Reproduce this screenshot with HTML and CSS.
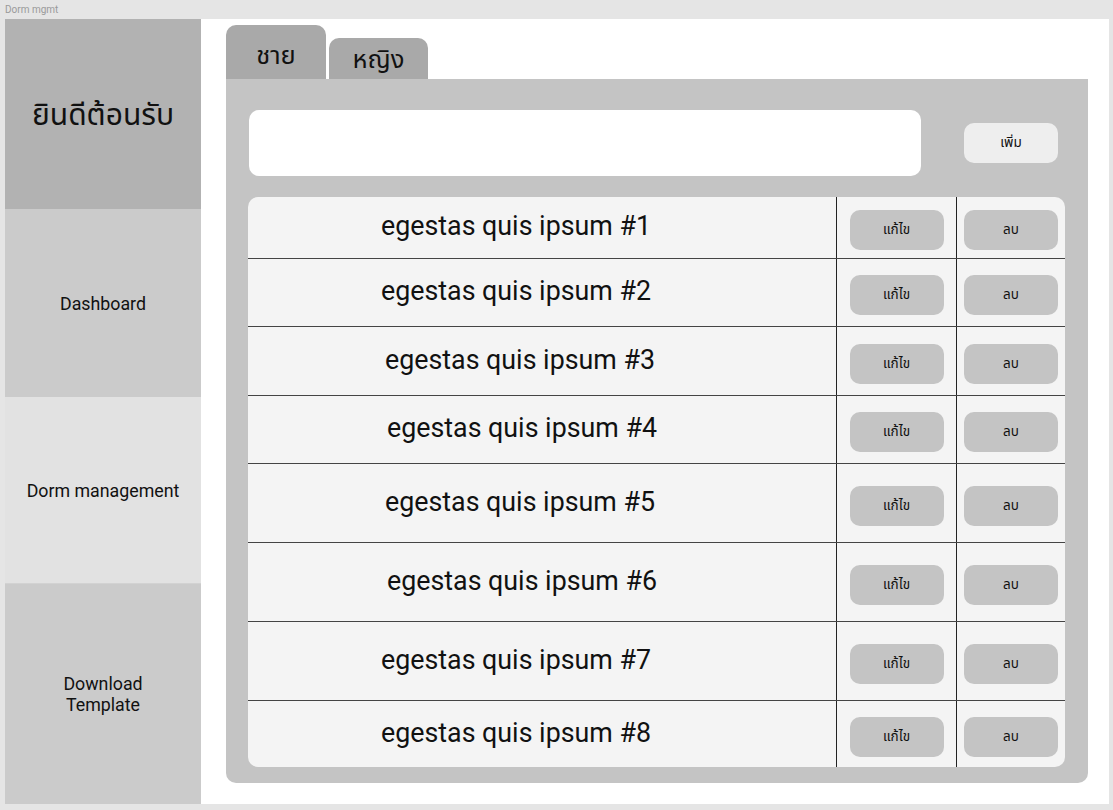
FILE: index.html
```html
<!DOCTYPE html>
<html lang="th">
<head>
<meta charset="utf-8">
<title>Dorm mgmt</title>
<link rel="stylesheet" href="styles.css">
</head>
<body>
<div class="app-title">Dorm mgmt</div>
<div class="frame">
  <aside class="sidebar">
    <div class="side-head">ยินดีต้อนรับ</div>
    <div class="side-item side-dash">Dashboard</div>
    <div class="side-item side-dorm">Dorm management</div>
    <div class="side-item side-dl">Download<br>Template</div>
  </aside>
  <main class="main">
    <div class="tabs">
      <div class="tab tab-active">ชาย</div>
      <div class="tab tab-second">หญิง</div>
    </div>
    <section class="panel">
      <div class="add-row">
        <div class="input-box"></div>
        <button class="btn btn-add">เพิ่ม</button>
      </div>
      <div class="table">
        <div class="row h62"><div class="cell-name">egestas quis ipsum #1</div><div class="cell-act"><button class="btn btn-act">แก้ไข</button></div><div class="cell-act"><button class="btn btn-act">ลบ</button></div></div>
        <div class="row h68"><div class="cell-name">egestas quis ipsum #2</div><div class="cell-act"><button class="btn btn-act">แก้ไข</button></div><div class="cell-act"><button class="btn btn-act">ลบ</button></div></div>
        <div class="row h69"><div class="cell-name shift">egestas quis ipsum #3</div><div class="cell-act"><button class="btn btn-act">แก้ไข</button></div><div class="cell-act"><button class="btn btn-act">ลบ</button></div></div>
        <div class="row h68"><div class="cell-name shift2">egestas quis ipsum #4</div><div class="cell-act"><button class="btn btn-act">แก้ไข</button></div><div class="cell-act"><button class="btn btn-act">ลบ</button></div></div>
        <div class="row h79"><div class="cell-name shift">egestas quis ipsum #5</div><div class="cell-act"><button class="btn btn-act">แก้ไข</button></div><div class="cell-act"><button class="btn btn-act">ลบ</button></div></div>
        <div class="row h79"><div class="cell-name shift2">egestas quis ipsum #6</div><div class="cell-act"><button class="btn btn-act">แก้ไข</button></div><div class="cell-act"><button class="btn btn-act">ลบ</button></div></div>
        <div class="row h79"><div class="cell-name">egestas quis ipsum #7</div><div class="cell-act"><button class="btn btn-act">แก้ไข</button></div><div class="cell-act"><button class="btn btn-act">ลบ</button></div></div>
        <div class="row h66 last"><div class="cell-name">egestas quis ipsum #8</div><div class="cell-act"><button class="btn btn-act">แก้ไข</button></div><div class="cell-act"><button class="btn btn-act">ลบ</button></div></div>
      </div>
    </section>
  </main>
</div>
</body>
</html>
```

FILE: styles.css
```css
* { box-sizing: border-box; }

html, body {
  margin: 0;
  padding: 0;
}

body {
  background: #e5e5e5;
  font-family: Roboto, "Noto Sans", "Noto Sans Thai", sans-serif;
  color: #111;
  width: 1113px;
  height: 810px;
  overflow: hidden;
}

.app-title {
  height: 19px;
  padding: 4px 0 0 5px;
  font-size: 10px;
  line-height: 12px;
  color: #9a9a9a;
}

.frame {
  margin-left: 5px;
  width: 1104px;
  height: 785px;
  background: #ffffff;
  display: flex;
}

.sidebar {
  width: 196px;
  display: flex;
  flex-direction: column;
}

.side-head {
  height: 190px;
  background: #b2b2b2;
  display: flex;
  align-items: center;
  justify-content: center;
  font-family: "Noto Sans Thai", "Noto Sans", sans-serif;
  font-size: 30px;
  padding-top: 4px;
}

.side-item {
  display: flex;
  align-items: center;
  justify-content: center;
  text-align: center;
  font-size: 17.8px;
  line-height: 21px;
}

.side-dash {
  height: 188px;
  background: #cbcbcb;
}

.side-dorm {
  height: 187px;
  background: #e2e2e2;
  border-bottom: 1px solid #d2d2d2;
}

.side-dl {
  flex: 1;
  background: #cbcbcb;
}

.main {
  flex: 1;
  padding: 6px 21px 21px 25px;
  display: flex;
  flex-direction: column;
}

.tabs {
  height: 54px;
  display: flex;
  align-items: flex-end;
  gap: 3px;
}

.tab {
  background: #a9a9a9;
  border-radius: 10px 10px 0 0;
  display: flex;
  justify-content: center;
  font-family: "Noto Sans Thai", "Noto Sans", sans-serif;
  font-size: 25.5px;
  color: #111;
}

.tab-active {
  width: 100px;
  height: 54px;
  padding-top: 12px;
}

.tab-second {
  width: 99px;
  height: 41px;
  padding-top: 3px;
}

.panel {
  flex: 1;
  background: #c4c4c4;
  border-radius: 0 0 10px 10px;
  padding: 31px 23px 16px 22px;
  display: flex;
  flex-direction: column;
}

.add-row {
  display: flex;
  align-items: center;
  height: 66px;
  margin-bottom: 21px;
}

.input-box {
  width: 672px;
  height: 66px;
  margin-left: 1px;
  background: #ffffff;
  border-radius: 10px;
}

.btn {
  border: none;
  border-radius: 10px;
  font-family: "Noto Sans Thai", "Noto Sans", sans-serif;
  font-size: 13.5px;
  color: #111;
  padding: 0;
}

.btn-add {
  margin-left: 43px;
  width: 94px;
  height: 40px;
  background: #eeeeee;
}

.table {
  background: #f4f4f4;
  border-radius: 10px;
  width: 817px;
  height: 570px;
  display: flex;
  flex-direction: column;
}

.row {
  display: grid;
  grid-template-columns: 588px 120px 109px;
  border-bottom: 1px solid #444;
}

.row.last { border-bottom: none; }

.h62 { height: 62px; }
.h66 { height: 66px; }
.h68 { height: 68px; }
.h69 { height: 69px; }
.h79 { height: 79px; }

.cell-name {
  display: flex;
  align-items: center;
  justify-content: center;
  padding-right: 52px;
  padding-bottom: 3px;
  font-size: 26.8px;
  color: #111;
}

.cell-name.shift { padding-right: 44px; }
.cell-name.shift2 { padding-right: 40px; }

.cell-act {
  border-left: 1px solid #222;
  display: flex;
  align-items: center;
  justify-content: center;
  padding-top: 5px;
}

.btn-act {
  width: 94px;
  height: 40px;
  background: #c4c4c4;
}
```
